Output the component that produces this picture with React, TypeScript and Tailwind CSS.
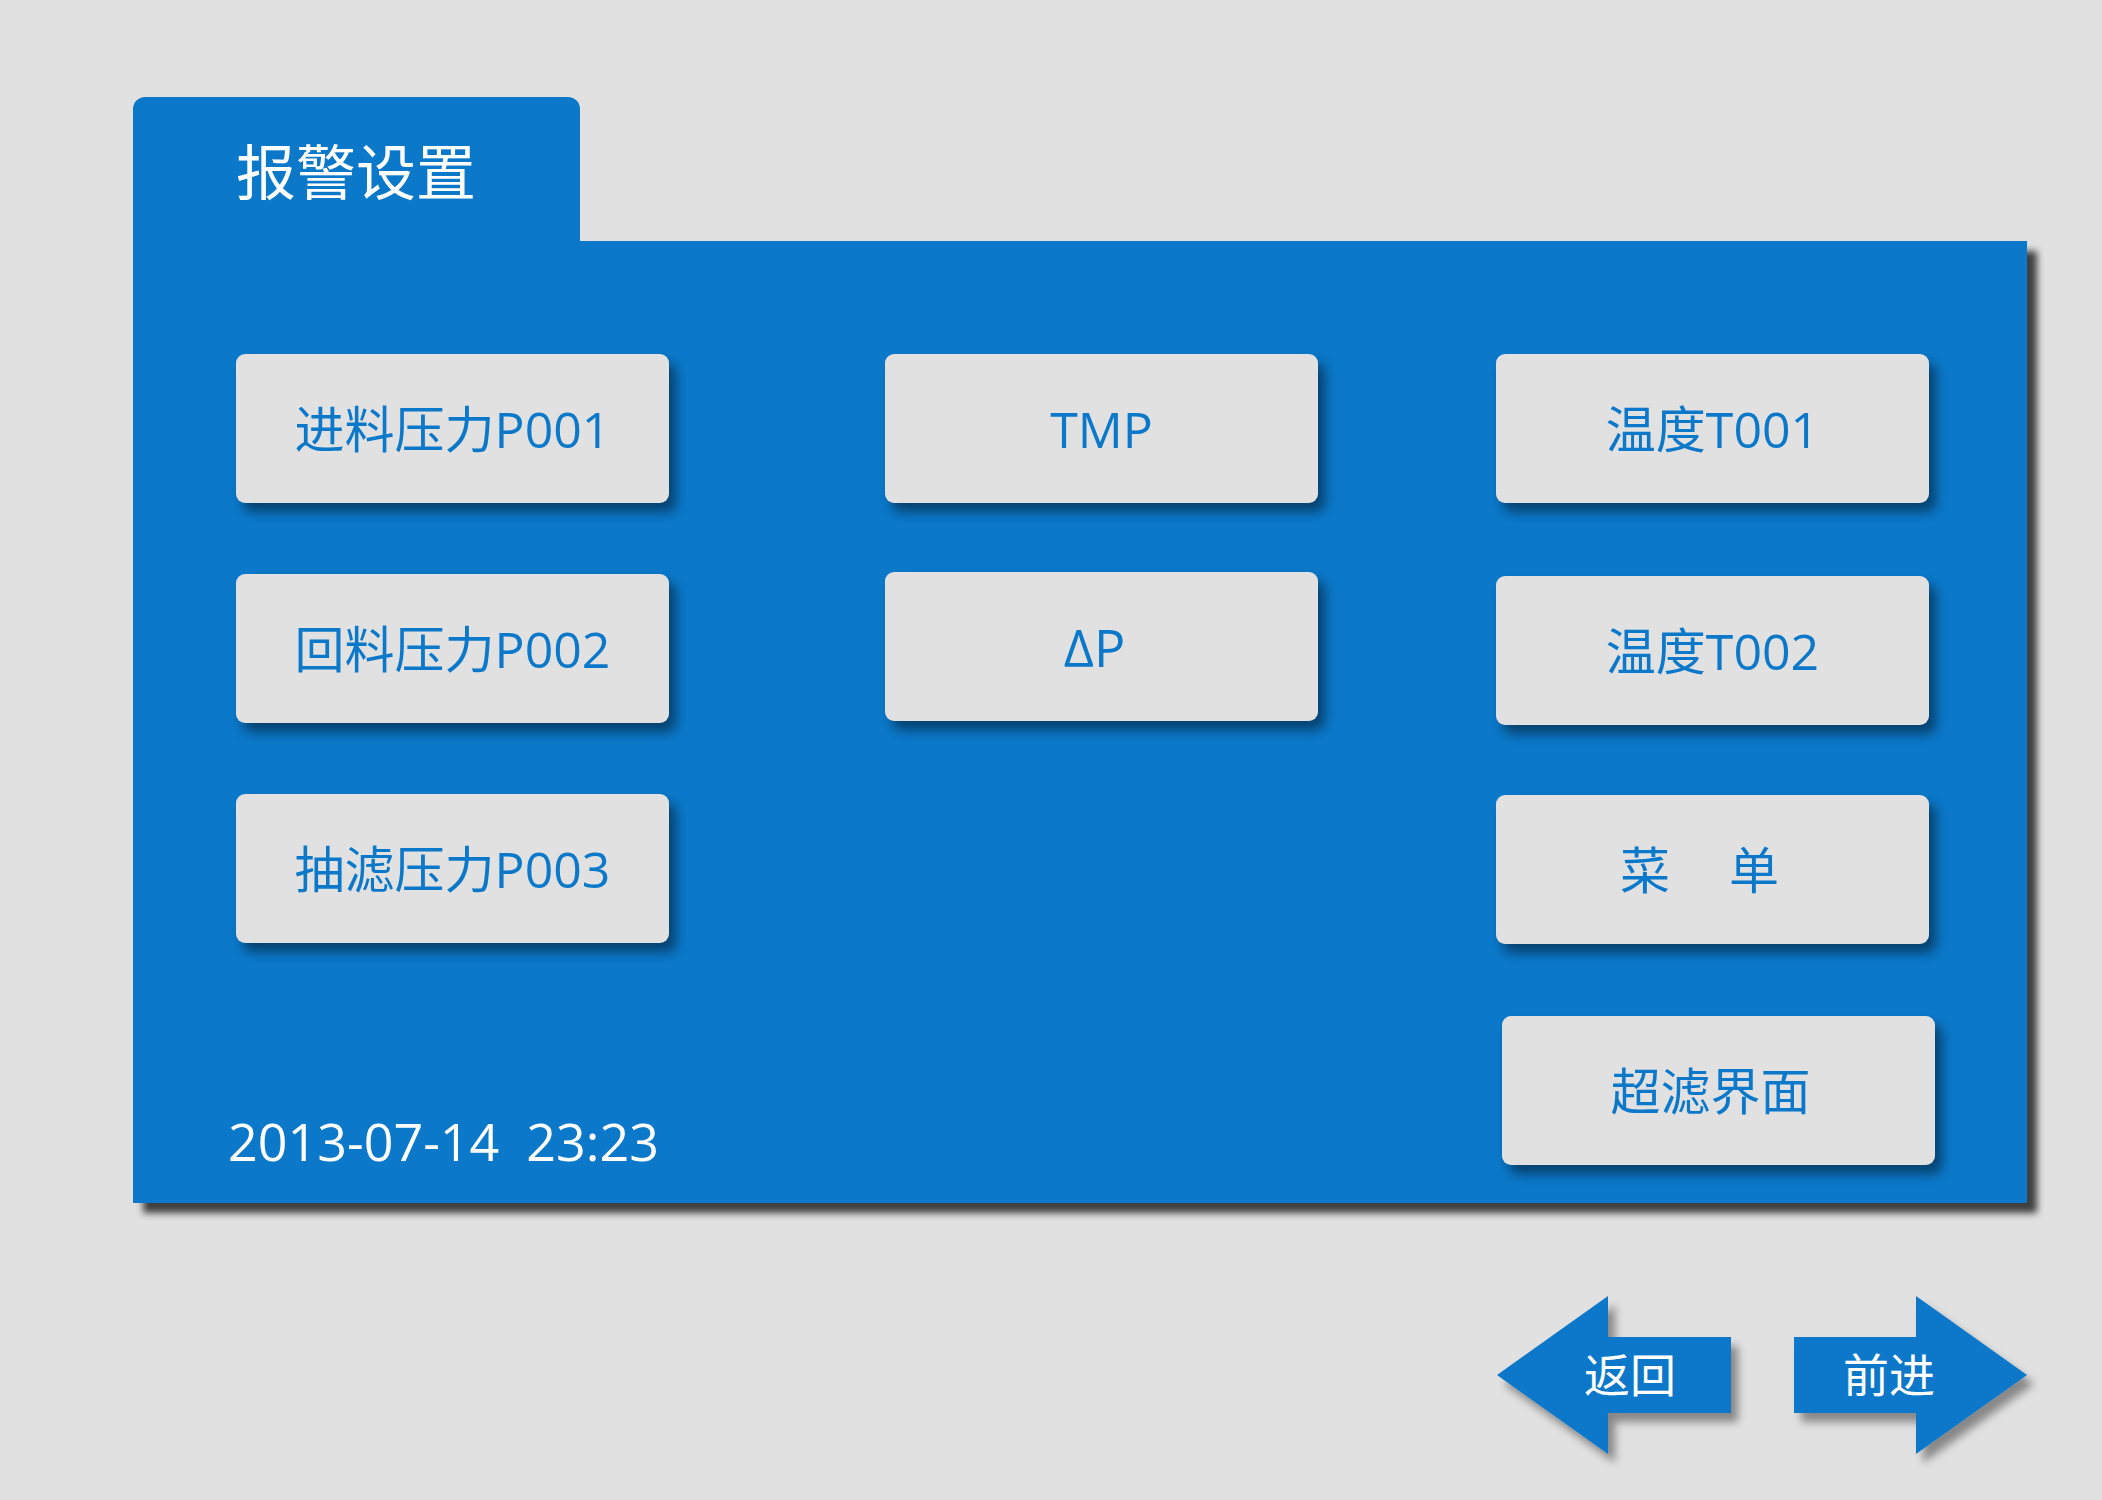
import React from 'react';

const FONT = "font-['Open_Sans','Noto_Sans_CJK_SC',sans-serif]";

interface KeyProps {
  label: React.ReactNode;
  className?: string;
}

function Key({ label, className = '' }: KeyProps) {
  return (
    <button
      className={`flex h-[149px] w-[433px] items-center justify-center rounded-[9px] bg-[#e1e1e1] text-[50px] leading-none text-[#0b78c9] shadow-[7px_9px_12px_rgba(0,0,0,0.45)] ${className}`}
    >
      {label}
    </button>
  );
}

function ArrowLeft() {
  return (
    <div className="relative flex h-[158px] w-[234px] items-center pl-[87px]">
      <svg
        className="absolute inset-0 overflow-visible"
        width="234"
        height="158"
        viewBox="0 0 234 158"
      >
        <defs>
          <filter id="arrowShadowL" x="-10%" y="-10%" width="130%" height="130%">
            <feDropShadow dx="7" dy="9" stdDeviation="4" floodColor="#000" floodOpacity="0.4" />
          </filter>
        </defs>
        <polygon
          points="0,79 111,0 111,41 234,41 234,117 111,117 111,158"
          fill="#0b78c9"
          filter="url(#arrowShadowL)"
        />
      </svg>
      <span className="relative -mt-[2px] text-[46px] leading-none text-white">返回</span>
    </div>
  );
}

function ArrowRight() {
  return (
    <div className="relative flex h-[158px] w-[233px] items-center pl-[49px]">
      <svg
        className="absolute inset-0 overflow-visible"
        width="233"
        height="158"
        viewBox="0 0 233 158"
      >
        <defs>
          <filter id="arrowShadowR" x="-10%" y="-10%" width="130%" height="130%">
            <feDropShadow dx="7" dy="9" stdDeviation="4" floodColor="#000" floodOpacity="0.4" />
          </filter>
        </defs>
        <polygon
          points="233,79 122,0 122,41 0,41 0,117 122,117 122,158"
          fill="#0b78c9"
          filter="url(#arrowShadowR)"
        />
      </svg>
      <span className="relative -mt-[2px] text-[46px] leading-none text-white">前进</span>
    </div>
  );
}

export default function App() {
  return (
    <div className={`min-h-[1500px] w-full bg-[#e1e1e1] pl-[133px] pt-[97px] ${FONT}`}>
      {/* tab */}
      <div className="flex h-[144px] w-[447px] items-center rounded-t-[12px] bg-[#0b78c9] pl-[103px] pt-[6px]">
        <span className="text-[60px] leading-none text-white">报警设置</span>
      </div>

      {/* main panel */}
      <div className="flex h-[962px] w-[1894px] bg-[#0b78c9] pl-[103px] pt-[113px] shadow-[10px_10px_7px_rgba(0,0,0,0.72)]">
        <div className="flex h-full w-[433px] flex-col">
          <div className="flex flex-col gap-[71px]">
            <Key label="进料压力P001" />
            <Key label="回料压力P002" />
            <Key label="抽滤压力P003" />
          </div>
          <div className="mt-auto -ml-[8px] whitespace-pre pb-[36px] text-[52px] leading-none text-white">
            2013-07-14{'  '}23:23
          </div>
        </div>

        <div className="ml-[216px] flex flex-col gap-[69px]">
          <Key label="TMP" />
          <Key label={<span className="-ml-[14px] text-[52px]">ΔP</span>} />
        </div>

        <div className="ml-[178px] flex flex-col">
          <Key label="温度T001" />
          <Key label="温度T002" className="mt-[73px]" />
          <Key
            className="mt-[70px]"
            label={
              <span className="-ml-[26px] flex gap-[59px]">
                <span>菜</span>
                <span>单</span>
              </span>
            }
          />
          <Key
            label={<span className="-ml-[16px]">超滤界面</span>}
            className="mt-[72px] ml-[6px]"
          />
        </div>
      </div>

      {/* navigation */}
      <div className="mt-[93px] flex w-[1894px] justify-end gap-[63px]">
        <ArrowLeft />
        <ArrowRight />
      </div>
    </div>
  );
}
